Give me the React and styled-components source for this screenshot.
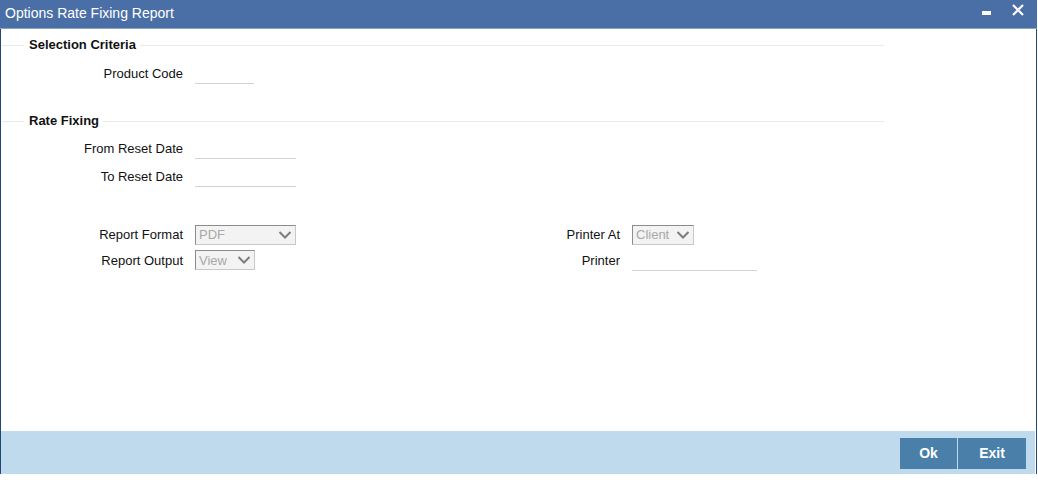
import React from "react";
import styled, { createGlobalStyle } from "styled-components";

const Global = createGlobalStyle`
  html, body { margin: 0; padding: 0; background: #fff; }
  body { font-family: Arial, "Liberation Sans", sans-serif; }
`;

const Window = styled.div`
  width: 1037px;
  height: 474px;
  box-sizing: border-box;
  border-left: 1px solid #24477a;
  border-right: 1px solid #24477a;
  display: flex;
  flex-direction: column;
  background: #fff;
`;

const TitleBar = styled.div`
  height: 28px;
  background: #4a6fa6;
  border-bottom: 1px solid #8ea3b8;
  display: flex;
  align-items: center;
  justify-content: space-between;
  padding: 0 13px 0 5px;
  margin-left: -1px;
  margin-right: -1px;
`;

const Title = styled.div`
  color: #fff;
  font-size: 14px;
  line-height: 16px;
  margin-top: -2px;
`;

const WinButtons = styled.div`
  display: flex;
  align-items: flex-start;
  align-self: flex-start;
  padding-top: 4px;
  gap: 21px;
`;

const Content = styled.div`
  flex: 1;
  display: flex;
  flex-direction: column;
`;

const LegendRow = styled.div`
  display: flex;
  align-items: center;
  width: 883px;
  height: 16px;
  margin-top: ${(p) => p.$top}px;
`;

const LegendLine = styled.div`
  height: 1px;
  background: #e9e9e9;
  flex: ${(p) => (p.$grow ? 1 : "none")};
  width: ${(p) => (p.$grow ? "auto" : "22px")};
  margin-left: ${(p) => (p.$grow ? 0 : 1)}px;
`;

const Legend = styled.div`
  font-size: 13px;
  font-weight: bold;
  color: #111;
  padding: 0 4px 0 5px;
  line-height: 16px;
`;

const Row = styled.div`
  display: flex;
  align-items: center;
  height: ${(p) => p.$h || 28}px;
  margin-top: ${(p) => p.$top || 0}px;
`;

const Label = styled.div`
  width: ${(p) => p.$w}px;
  text-align: right;
  font-size: 13px;
  color: #111;
  margin-right: 12px;
  flex: none;
`;

const LineInput = styled.div`
  width: ${(p) => p.$w}px;
  height: 19px;
  border-bottom: 1px solid #d3d3d3;
  margin-top: 2px;
`;

const Select = styled.div`
  width: ${(p) => p.$w}px;
  height: 20px;
  box-sizing: border-box;
  border: 1px solid #c8c8c8;
  border-top-color: #8c8c8c;
  border-left-color: #8c8c8c;
  background: #f3f3f3;
  display: flex;
  align-items: center;
  justify-content: space-between;
  padding: 0 3px 0 3px;
  font-size: 13px;
  color: #a8a8a8;
`;

const Columns = styled.div`
  display: flex;
  margin-top: 32px;
`;

const Column = styled.div`
  display: flex;
  flex-direction: column;
`;

const Footer = styled.div`
  height: 43px;
  background: #bfdaed;
  display: flex;
  align-items: center;
  justify-content: flex-end;
  padding-right: 9px;
  margin-right: 1px;
  gap: 1px;
`;

const Button = styled.button`
  width: ${(p) => p.$w}px;
  height: 31px;
  border: none;
  background: #4a7faa;
  color: #fff;
  font-family: Arial, "Liberation Sans", sans-serif;
  font-weight: bold;
  font-size: 14px;
  padding: 0;
  margin-top: 1px;
`;

const Chevron = () => (
  <svg width="14" height="10" viewBox="0 0 14 10">
    <path d="M1.5 2 L7 7.5 L12.5 2" fill="none" stroke="#7d7d7d" strokeWidth="2" />
  </svg>
);

export default function App() {
  return (
    <>
      <Global />
      <Window>
        <TitleBar>
          <Title>Options Rate Fixing Report</Title>
          <WinButtons>
            <svg width="9" height="12" viewBox="0 0 9 12">
              <rect x="0" y="7" width="9" height="4" fill="#fff" />
            </svg>
            <svg width="12" height="12" viewBox="0 0 12 12">
              <path d="M1 1 L11 11 M11 1 L1 11" stroke="#fff" strokeWidth="2.2" />
            </svg>
          </WinButtons>
        </TitleBar>
        <Content>
          <LegendRow $top={8}>
            <LegendLine />
            <Legend>Selection Criteria</Legend>
            <LegendLine $grow />
          </LegendRow>
          <Row $top={6}>
            <Label $w={182}>Product Code</Label>
            <LineInput $w={59} />
          </Row>
          <LegendRow $top={26}>
            <LegendLine />
            <Legend>Rate Fixing</Legend>
            <LegendLine $grow />
          </LegendRow>
          <Row $top={5}>
            <Label $w={182}>From Reset Date</Label>
            <LineInput $w={101} />
          </Row>
          <Row>
            <Label $w={182}>To Reset Date</Label>
            <LineInput $w={101} />
          </Row>
          <Columns>
            <Column>
              <Row $h={25}>
                <Label $w={182}>Report Format</Label>
                <Select $w={101}>
                  PDF
                  <Chevron />
                </Select>
              </Row>
              <Row $h={26}>
                <Label $w={182}>Report Output</Label>
                <Select $w={60}>
                  View
                  <Chevron />
                </Select>
              </Row>
            </Column>
            <Column>
              <Row $h={25}>
                <Label $w={324}>Printer At</Label>
                <Select $w={62}>
                  Client
                  <Chevron />
                </Select>
              </Row>
              <Row $h={26}>
                <Label $w={324}>Printer</Label>
                <LineInput $w={125} />
              </Row>
            </Column>
          </Columns>
        </Content>
        <Footer>
          <Button $w={57}>Ok</Button>
          <Button $w={68}>Exit</Button>
        </Footer>
      </Window>
    </>
  );
}
